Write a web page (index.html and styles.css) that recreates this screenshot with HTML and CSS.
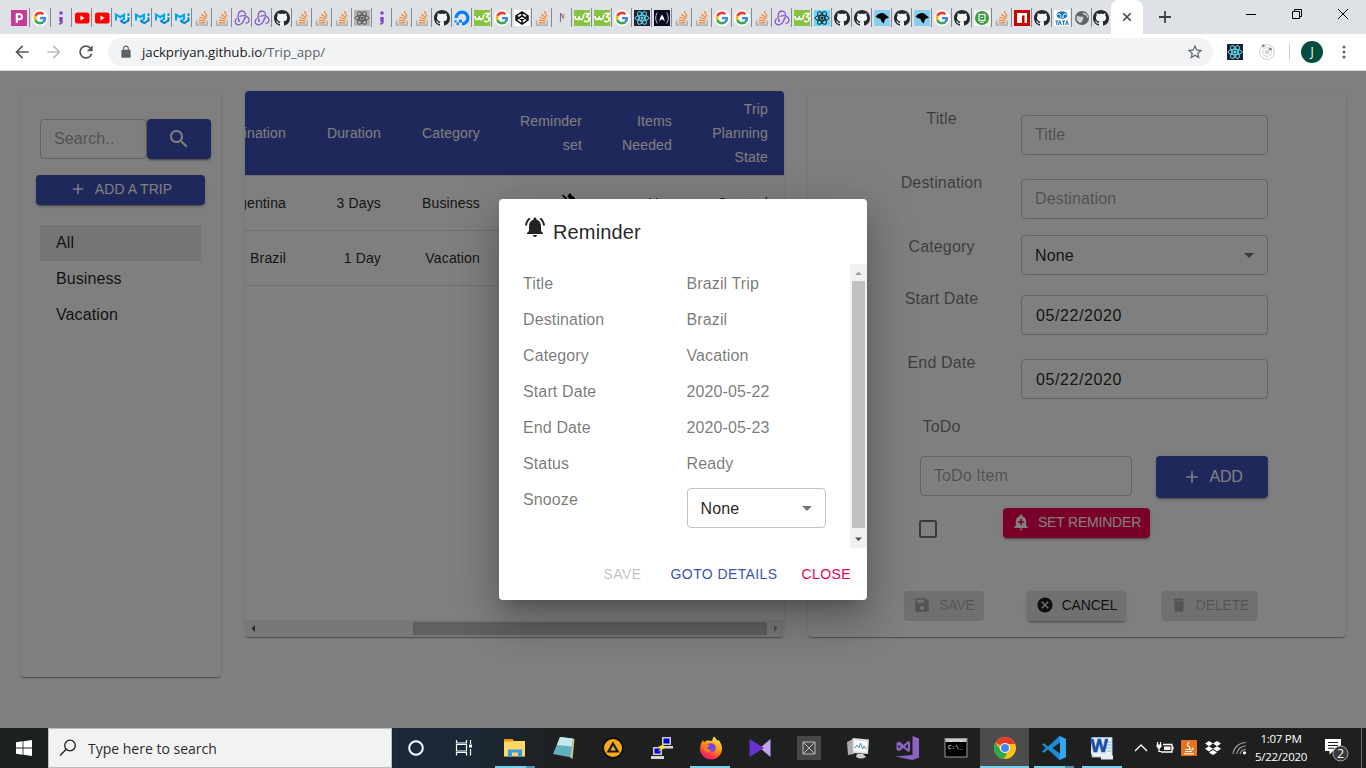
FILE: index.html
```html
<!DOCTYPE html>
<html lang="en">
<head>
<meta charset="utf-8">
<title>Trip app</title>
<link rel="stylesheet" href="styles.css">
</head>
<body>
<svg class="defs" width="0" height="0">
  <symbol id="pp" viewBox="0 0 16 16"><rect width="16" height="16" fill="#c73a94"/><path d="M5.800 13V4.200h2.700a2.400 2.400 0 010 4.900H5.800" fill="none" stroke="#fff" stroke-width="2.100"/></symbol>
  <symbol id="gg" viewBox="0 0 16 16"><circle cx="8" cy="8" r="8" fill="#fff"/><g transform="translate(1.6 1.6) scale(.267)"><path fill="#EA4335" d="M24 9.5c3.54 0 6.71 1.22 9.21 3.6l6.85-6.85C35.9 2.38 30.47 0 24 0 14.62 0 6.51 5.38 2.56 13.22l7.98 6.19C12.43 13.72 17.74 9.5 24 9.5z"/><path fill="#4285F4" d="M46.98 24.55c0-1.57-.15-3.09-.38-4.55H24v9.02h12.94c-.58 2.96-2.26 5.48-4.78 7.18l7.73 6c4.51-4.18 7.09-10.36 7.09-17.65z"/><path fill="#FBBC05" d="M10.53 28.59c-.48-1.45-.76-2.99-.76-4.59s.27-3.14.76-4.59l-7.98-6.19C.92 16.46 0 20.12 0 24c0 3.88.92 7.54 2.56 10.78l7.97-6.19z"/><path fill="#34A853" d="M24 48c6.48 0 11.93-2.13 15.89-5.81l-7.73-6c-2.15 1.45-4.92 2.3-8.16 2.3-6.26 0-11.57-4.22-13.47-9.91l-7.98 6.19C6.51 42.62 14.62 48 24 48z"/></g></symbol>
  <symbol id="semi" viewBox="0 0 16 16"><circle cx="8" cy="3" r="1.8" fill="#8b3fc4"/><path d="M6.3 7h3.4v5q0 2-3.4 3v-2q1.300-.4 1.300-1.200H6.300z" fill="#8b3fc4"/></symbol>
  <symbol id="yt" viewBox="0 0 16 16"><rect x="1" y="2.500" width="14.500" height="11" rx="2.600" fill="#f00"/><path d="M6.500 5.500v5l4-2.500z" fill="#fff"/></symbol>
  <symbol id="mui" viewBox="0 0 16 16"><path d="M2 10.500V4.500L6.200 7.200 10 4.800V9L6.500 11" fill="none" stroke="#00a6f0" stroke-width="2"/><path d="M6.500 10.800l3.800 2.200 4.200-2.500V7.200M14.500 3.500v2.300" fill="none" stroke="#0081cb" stroke-width="2"/></symbol>
  <symbol id="so" viewBox="0 0 16 16"><path d="M2.500 10.500v4.700h10.700v-4.700" fill="none" stroke="#a2a5a9" stroke-width="1.300"/><path d="M4.500 12.800h6.700M4.700 10.100l6.600.9M5.500 7.200l6.200 2.100M7.300 4.200l5.200 3.700M10.200 1.200l3.200 5.300" stroke="#f48024" stroke-width="1.200" fill="none"/></symbol>
  <symbol id="rdx" viewBox="0 0 16 16"><g fill="none" stroke="#8a5cc6" stroke-width="1.300"><path d="M5 10.500C2.500 5 5 1 8 1c2.300 0 3.700 2 3.400 4.200"/><path d="M5.500 6.500c6-2.500 10 .6 9.500 4.200-.3 2-2 2.800-3.600 2.400"/><path d="M10.500 8.500C9 14.500 4 16.200 1.800 13.500.5 11.700 1.500 9.500 3 8.500"/></g><circle cx="11" cy="8" r="1.100" fill="#8a5cc6"/><circle cx="5" cy="11" r="1.100" fill="#8a5cc6"/></symbol>
  <symbol id="gh" viewBox="0 0 16 16"><circle cx="8" cy="8" r="7.500" fill="#f4f5f6"/><path fill="#24292e" d="M8 0C3.580 0 0 3.580 0 8c0 3.540 2.290 6.530 5.470 7.590.4.070.55-.17.55-.38 0-.19-.01-.82-.01-1.490-2.010.370-2.530-.49-2.690-.94-.09-.23-.48-.94-.82-1.130-.28-.15-.68-.52-.01-.53.630-.01 1.080.580 1.230.820.720 1.210 1.870.870 2.330.660.070-.52.280-.87.510-1.070-1.780-.2-3.640-.89-3.640-3.950 0-.87.310-1.590.820-2.150-.08-.2-.36-1.020.080-2.120 0 0 .670-.21 2.200.820.640-.18 1.320-.27 2-.27.680 0 1.360.090 2 .27 1.530-1.040 2.200-.82 2.200-.82.440 1.100.160 1.920.080 2.120.510.560.820 1.270.820 2.150 0 3.070-1.870 3.750-3.650 3.950.290.250.540.730.540 1.480 0 1.070-.01 1.930-.01 2.200 0 .210.150.460.550.380A8.013 8.013 0 0016 8c0-4.420-3.580-8-8-8z"/></symbol>
  <symbol id="atom" viewBox="0 0 16 16"><g fill="none" stroke="currentColor" stroke-width="1"><ellipse cx="8" cy="8" rx="7" ry="2.700"/><ellipse cx="8" cy="8" rx="7" ry="2.700" transform="rotate(60 8 8)"/><ellipse cx="8" cy="8" rx="7" ry="2.700" transform="rotate(120 8 8)"/></g><circle cx="8" cy="8" r="1.500" fill="currentColor"/></symbol>
  <symbol id="do" viewBox="0 0 16 16"><path d="M8 15.500v-3.200A4.300 4.300 0 103.700 8H.5A7.500 7.500 0 118 15.500z" fill="#0080ff"/><path d="M5 9.800h3v2.700H5zM2.600 12.500H5V15H2.600zM.6 10.300h2v2.200h-2z" fill="#0080ff"/></symbol>
  <symbol id="w3" viewBox="0 0 16 16"><rect width="16" height="16" fill="#86c440"/><path d="M.8 6q.4 3.500 2.200 3.500T5.200 6.300q.4 3.200 2.200 3.200T9.800 4.500M10.500 3.500h4.700l-2.500 3.200q2.600.3 2.600 2.500t-2.800 2.500q-1.500 0-2.300-1.200" fill="none" stroke="#fff" stroke-width="1.600"/></symbol>
  <symbol id="cp" viewBox="0 0 16 16"><rect width="16" height="16" fill="#fff"/><path d="M8 1.800l6 4v4.400l-6 4-6-4V5.800zM8 1.800v4m0 4.400v4M2 5.800l6 4.400 6-4.400M2 10.200l6-4.400 6 4.400" fill="none" stroke="#111" stroke-width="1.500"/></symbol>
  <symbol id="nn" viewBox="0 0 16 16"><path d="M6.500 3v9" stroke="#777" stroke-width="1.200"/><path d="M7 3.500l2.300 5" stroke="#bb4a48" stroke-width="1"/><path d="M9.700 3.500v5" stroke="#8a98ad" stroke-width="1"/></symbol>
  <symbol id="fcc" viewBox="0 0 16 16"><rect width="16" height="16" fill="#0a0a23"/><path d="M3.300 2.500Q0 8 3.300 13.500M12.700 2.500Q16 8 12.700 13.500" fill="none" stroke="#bbb" stroke-width="1"/><path d="M5.500 11.500Q5.200 9 8 4.500q2.800 4.500 2.500 7l-1.500-2H7z" fill="#fff"/></symbol>
  <symbol id="bird" viewBox="0 0 16 16"><rect width="16" height="16" fill="#86cff0"/><path d="M1.500 6.500q2-3 6-3.500 3.500-.3 5 2.500l2.500 2-3.500 1.500-1 1.500-.5 3-2.500-2-1-2.500L3.500 8z" fill="#000"/></symbol>
  <symbol id="grn" viewBox="0 0 16 16"><rect width="16" height="16" fill="#f2f5f2"/><circle cx="8" cy="8" r="7" fill="#3d9a43"/><rect x="5" y="4.500" width="6" height="6" fill="none" stroke="#e9f5ea" stroke-width="1.300"/><path d="M7 7.500h2M6 12.300h4" stroke="#e9f5ea"/></symbol>
  <symbol id="npm" viewBox="0 0 16 16"><rect width="16" height="16" fill="#cb0000"/><path d="M3 3h10v10h-2.500V5.500H8V13H3z" fill="#fff"/></symbol>
  <symbol id="tata" viewBox="0 0 16 16"><rect width="16" height="16" fill="#fff"/><ellipse cx="8" cy="5" rx="5.500" ry="3.800" fill="#1b75bb"/><path d="M3 5q4-3.500 4 3M13 5Q9 1.500 9 8" stroke="#fff" fill="none"/><path d="M1.200 11h3.200M2.800 11v4M4.300 15l1.500-4 1.500 4M8 11h3.200M9.600 11v4M11.500 15l1.500-4 1.500 4" fill="none" stroke="#1b75bb" stroke-width="1.100"/></symbol>
  <symbol id="globe" viewBox="0 0 16 16"><circle cx="8" cy="8" r="7" fill="#5f6368"/><path d="M3 5.500Q5 7 7.500 6.500T9 9.500q-1 3-3 3.500Q2.500 11 2.500 8zM8.500 2.500q0 2 2.500 2.500t2 3l1.500-.5Q13.500 3 8.500 2.500z" fill="#d0d2d5"/></symbol>
  <symbol id="i-add" viewBox="0 0 24 24"><path d="M19 13h-6v6h-2v-6H5v-2h6V5h2v6h6v2z"/></symbol>
  <symbol id="i-drop" viewBox="0 0 24 24"><path d="M7 10l5 5 5-5z"/></symbol>
  <symbol id="i-back" viewBox="0 0 24 24"><path d="M20 11H7.830l5.590-5.590L12 4l-8 8 8 8 1.410-1.410L7.830 13H20v-2z"/></symbol>
</svg>

<header class="tabs">
  <i class="tab wide"><svg><use href="#pp"/></svg></i><i class="tab wide"><svg><use href="#gg"/></svg></i><i class="tab wide"><svg><use href="#semi"/></svg></i>
  <i class="tab"><svg><use href="#yt"/></svg></i><i class="tab"><svg><use href="#yt"/></svg></i><i class="tab"><svg><use href="#mui"/></svg></i><i class="tab"><svg><use href="#mui"/></svg></i><i class="tab"><svg><use href="#mui"/></svg></i><i class="tab"><svg><use href="#mui"/></svg></i>
  <i class="tab"><svg><use href="#so"/></svg></i><i class="tab"><svg><use href="#so"/></svg></i><i class="tab"><svg><use href="#rdx"/></svg></i><i class="tab"><svg><use href="#rdx"/></svg></i><i class="tab"><svg><use href="#gh"/></svg></i>
  <i class="tab"><svg><use href="#so"/></svg></i><i class="tab"><svg><use href="#so"/></svg></i><i class="tab"><svg><use href="#so"/></svg></i><i class="tab"><svg class="atom-gray"><use href="#atom"/></svg></i><i class="tab"><svg><use href="#semi"/></svg></i>
  <i class="tab"><svg><use href="#so"/></svg></i><i class="tab"><svg><use href="#so"/></svg></i><i class="tab"><svg><use href="#gh"/></svg></i><i class="tab"><svg><use href="#do"/></svg></i><i class="tab"><svg><use href="#w3"/></svg></i><i class="tab"><svg><use href="#gg"/></svg></i>
  <i class="tab"><svg><use href="#cp"/></svg></i><i class="tab"><svg><use href="#so"/></svg></i><i class="tab"><svg><use href="#nn"/></svg></i><i class="tab"><svg><use href="#w3"/></svg></i><i class="tab"><svg><use href="#w3"/></svg></i><i class="tab"><svg><use href="#gg"/></svg></i>
  <i class="tab"><svg class="atom-dark"><use href="#atom"/></svg></i><i class="tab"><svg><use href="#fcc"/></svg></i><i class="tab"><svg><use href="#so"/></svg></i><i class="tab"><svg><use href="#so"/></svg></i><i class="tab"><svg><use href="#gg"/></svg></i><i class="tab"><svg><use href="#gg"/></svg></i>
  <i class="tab"><svg><use href="#so"/></svg></i><i class="tab"><svg><use href="#rdx"/></svg></i><i class="tab"><svg><use href="#w3"/></svg></i><i class="tab"><svg class="atom-blue"><use href="#atom"/></svg></i><i class="tab"><svg><use href="#gh"/></svg></i><i class="tab"><svg><use href="#gh"/></svg></i>
  <i class="tab"><svg><use href="#bird"/></svg></i><i class="tab"><svg><use href="#gh"/></svg></i><i class="tab"><svg><use href="#bird"/></svg></i><i class="tab"><svg><use href="#gg"/></svg></i><i class="tab"><svg><use href="#gh"/></svg></i><i class="tab"><svg><use href="#grn"/></svg></i>
  <i class="tab"><svg><use href="#so"/></svg></i><i class="tab"><svg><use href="#npm"/></svg></i><i class="tab"><svg><use href="#gh"/></svg></i><i class="tab"><svg><use href="#tata"/></svg></i><i class="tab"><svg><use href="#globe"/></svg></i><i class="tab last"><svg><use href="#gh"/></svg></i>
  <div class="tab-active"><svg viewBox="0 0 16 16"><path d="M3.700 3.700l8.600 8.600M12.300 3.700l-8.600 8.600" stroke="#45494d" stroke-width="1.900"/></svg></div>
  <svg class="new-tab" viewBox="0 0 16 16"><path d="M8 2v12M2 8h12" stroke="#3c4043" stroke-width="1.800"/></svg>
  <div class="win">
    <svg viewBox="0 0 12 12"><path d="M1 6.500h10" stroke="#000"/></svg>
    <svg viewBox="0 0 12 12"><path d="M1.500 3.500h7v7h-7zM3.500 3V1.500h7v7H9" stroke="#000" fill="none"/></svg>
    <svg viewBox="0 0 12 12"><path d="M1 1l10 10M11 1L1 11" stroke="#000"/></svg>
  </div>
</header>

<nav class="toolbar">
  <svg class="nav-ico"><use href="#i-back"/></svg>
  <svg class="nav-ico fwd"><use href="#i-back"/></svg>
  <svg class="nav-ico reload" viewBox="0 0 24 24"><path d="M17.650 6.350C16.200 4.900 14.210 4 12 4c-4.420 0-7.990 3.580-7.990 8s3.570 8 7.990 8c3.730 0 6.840-2.550 7.730-6h-2.080c-.82 2.330-3.040 4-5.650 4-3.310 0-6-2.690-6-6s2.690-6 6-6c1.660 0 3.140.69 4.220 1.780L13 11h7V4l-2.350 2.350z"/></svg>
  <div class="omnibox">
    <svg class="lock" viewBox="0 0 24 24"><path d="M18 8h-1V6c0-2.760-2.240-5-5-5S7 3.240 7 6v2H6c-1.100 0-2 .9-2 2v10c0 1.100.9 2 2 2h12c1.100 0 2-.9 2-2V10c0-1.100-.9-2-2-2zM9 6c0-1.660 1.340-3 3-3s3 1.340 3 3v2H9V6z"/></svg>
    <span class="url">jackpriyan.github.io<span>/Trip_app/</span></span>
    <svg class="star" viewBox="0 0 24 24"><path d="M22 9.240l-7.190-.62L12 2 9.190 8.630 2 9.240l5.460 4.730L5.820 21 12 17.270 18.180 21l-1.630-7.030L22 9.240zM12 15.400l-3.760 2.270 1-4.280-3.320-2.880 4.380-.38L12 6.100l1.710 4.040 4.380.38-3.320 2.880 1 4.280L12 15.400z"/></svg>
  </div>
  <svg class="ext atom-dark"><use href="#atom"/></svg>
  <svg class="ext" viewBox="0 0 16 16"><g fill="none" stroke="#d0d0d0"><circle cx="8" cy="8" r="7.400"/><circle cx="8" cy="8" r="4.400"/></g><circle cx="8" cy="8" r="2.300" fill="#d5d5d5"/><circle cx="4.300" cy="1.700" r="1.500" fill="#888"/><circle cx="11.300" cy="5" r="1.600" fill="#888"/></svg>
  <i class="tool-sep"></i>
  <span class="avatar">J</span>
  <svg class="menu" viewBox="0 0 4 16"><circle cx="2" cy="3" r="1.500"/><circle cx="2" cy="8" r="1.500"/><circle cx="2" cy="13" r="1.500"/></svg>
</nav>

<main class="page">
  <section class="card side">
    <div class="search-row">
      <div class="field search-field placeholder">Search..</div>
      <button class="btn primary search-btn"><svg viewBox="0 0 24 24"><path d="M15.500 14h-.79l-.28-.27C15.410 12.590 16 11.110 16 9.500 16 5.910 13.090 3 9.500 3S3 5.910 3 9.500 5.910 16 9.500 16c1.610 0 3.090-.59 4.230-1.570l.27.28v.79l5 4.990L20.490 19l-4.990-5zm-6 0C7.010 14 5 11.990 5 9.500S7.010 5 9.500 5 14 7.010 14 9.500 11.990 14 9.500 14z"/></svg></button>
    </div>
    <button class="btn primary add-trip"><svg><use href="#i-add"/></svg>ADD A TRIP</button>
    <ul class="cats"><li class="on">All</li><li>Business</li><li>Vacation</li></ul>
  </section>

  <section class="card trips">
    <div class="tr head"><span>Destination</span><span>Duration</span><span>Category</span><span>Reminder<br>set</span><span>Items<br>Needed</span><span>Trip<br>Planning<br>State</span></div>
    <div class="tr"><span>Argentina</span><span>3 Days</span><span>Business</span><span><svg class="bell-off" viewBox="0 0 24 24"><path d="M20 18.690L7.840 6.140 5.270 3.490 4 4.760l2.800 2.800v.01c-.52.99-.8 2.160-.8 3.420v5l-2 2v1h13.730l2 2L21 19.720l-1-1.030zM12 22c1.110 0 2-.89 2-2h-4c0 1.110.89 2 2 2zm6-7.320V11c0-3.080-1.640-5.640-4.500-6.320V4c0-.83-.67-1.500-1.500-1.500s-1.500.67-1.500 1.500v.68c-.15.030-.29.080-.42.120-.1.030-.2.070-.3.110h-.01c-.01 0-.01 0-.02.010-.23.090-.46.200-.68.310 0 0-.01 0-.01.010L18 14.680z"/></svg></span><span>Yes</span><span>Created</span></div>
    <div class="tr"><span>Brazil</span><span>1 Day</span><span>Vacation</span><span></span><span></span><span></span></div>
    <div class="hbar"><svg viewBox="0 0 17 17"><path d="M10 5v7L6.500 8.500z" fill="#505050"/></svg><i></i><svg viewBox="0 0 17 17"><path d="M7 5v7l3.500-3.500z" fill="#a3a3a3"/></svg></div>
  </section>

  <section class="card details">
    <div class="row"><label>Title</label><div class="field placeholder">Title</div></div>
    <div class="row"><label>Destination</label><div class="field placeholder">Destination</div></div>
    <div class="row short"><label>Category</label><div class="field select"><span>None</span><svg><use href="#i-drop"/></svg></div></div>
    <div class="row"><label>Start Date</label><div class="field date">05/22/2020</div></div>
    <div class="row"><label>End Date</label><div class="field date">05/22/2020</div></div>
    <div class="row todo-label"><label>ToDo</label></div>
    <div class="todo"><div class="field placeholder">ToDo Item</div><button class="btn primary add"><svg><use href="#i-add"/></svg>ADD</button></div>
    <div class="remind">
      <svg class="check" viewBox="0 0 24 24"><path d="M19 5v14H5V5h14m0-2H5c-1.100 0-2 .9-2 2v14c0 1.100.9 2 2 2h14c1.100 0 2-.9 2-2V5c0-1.100-.9-2-2-2z"/></svg>
      <button class="btn secondary tight"><svg viewBox="0 0 24 24"><path d="M10.010 21.010c0 1.100.89 1.990 1.990 1.990s1.990-.89 1.990-1.990h-3.980zm8.870-4.190V11c0-3.250-2.250-5.970-5.290-6.690v-.72C13.590 2.710 12.880 2 12 2s-1.590.71-1.590 1.590v.72C7.370 5.030 5.120 7.750 5.120 11v5.820L3 18.940V20h18v-1.060l-2.120-2.120zM16 13.010h-3v3h-2v-3H8V11h3V8h2v3h3v2.010z"/></svg>SET REMINDER</button>
    </div>
    <div class="form-actions">
      <button class="btn disabled tight b-save"><svg viewBox="0 0 24 24"><path d="M17 3H5c-1.110 0-2 .9-2 2v14c0 1.100.89 2 2 2h14c1.100 0 2-.9 2-2V7l-4-4zm-5 16c-1.660 0-3-1.340-3-3s1.340-3 3-3 3 1.340 3 3-1.340 3-3 3zm3-10H5V5h10v4z"/></svg>SAVE</button>
      <button class="btn plain tight b-cancel"><svg viewBox="0 0 24 24"><path d="M12 2C6.470 2 2 6.470 2 12s4.470 10 10 10 10-4.470 10-10S17.530 2 12 2zm5 13.590L15.590 17 12 13.410 8.410 17 7 15.590 10.590 12 7 8.410 8.410 7 12 10.590 15.590 7 17 8.410 13.410 12 17 15.590z"/></svg>CANCEL</button>
      <button class="btn disabled tight b-delete"><svg viewBox="0 0 24 24"><path d="M6 19c0 1.100.9 2 2 2h8c1.100 0 2-.9 2-2V7H6v12zM19 4h-3.500l-1-1h-5l-1 1H5v2h14V4z"/></svg>DELETE</button>
    </div>
  </section>

  <div class="backdrop">
    <div class="dialog">
      <h2><svg viewBox="0 0 24 24"><path d="M7.580 4.080L6.150 2.650C3.750 4.480 2.170 7.300 2.030 10.500h2c.15-2.650 1.510-4.970 3.550-6.420zm12.390 6.420h2c-.15-3.200-1.730-6.020-4.120-7.850l-1.420 1.430c2.020 1.450 3.390 3.770 3.540 6.420zM18 11c0-3.070-1.640-5.640-4.500-6.320V4c0-.83-.67-1.500-1.500-1.500s-1.500.67-1.500 1.500v.68C7.630 5.360 6 7.920 6 11v5l-2 2v1h16v-1l-2-2v-5zm-6 11c.14 0 .27-.01.4-.04.65-.14 1.180-.58 1.440-1.180.1-.24.15-.5.15-.78h-4c.01 1.100.9 2 2.010 2z"/></svg><span>Reminder</span></h2>
      <div class="dialog-body">
        <dl>
          <dt>Title</dt><dd>Brazil Trip</dd>
          <dt>Destination</dt><dd>Brazil</dd>
          <dt>Category</dt><dd>Vacation</dd>
          <dt>Start Date</dt><dd>2020-05-22</dd>
          <dt>End Date</dt><dd>2020-05-23</dd>
          <dt>Status</dt><dd>Ready</dd>
          <dt>Snooze</dt><dd><div class="field select"><span>None</span><svg><use href="#i-drop"/></svg></div></dd>
        </dl>
        <div class="vbar"><svg viewBox="0 0 17 17"><path d="M5 11h7L8.500 7.500z" fill="#a3a3a3"/></svg><i></i><svg viewBox="0 0 17 17"><path d="M5 6.500h7L8.500 10z" fill="#505050"/></svg></div>
      </div>
      <div class="dialog-actions"><button class="link off">SAVE</button><button class="link blue">GOTO DETAILS</button><button class="link pink">CLOSE</button></div>
    </div>
  </div>
</main>

<footer class="taskbar">
  <div class="start"><svg viewBox="0 0 16 16"><path d="M0 2.200L6.600 1.300v6.300H0zM7.400 1.200L16 0v7.600H7.400zM0 8.400h6.600v6.300L0 13.800zM7.400 8.400H16V16l-8.600-1.200z" fill="#fff"/></svg></div>
  <div class="tsearch"><svg viewBox="0 0 18 18"><circle cx="11" cy="6.500" r="5.300" fill="none" stroke="#222" stroke-width="1.300"/><path d="M7.200 10.300L1 16.500" stroke="#222" stroke-width="1.400"/></svg><span>Type here to search</span></div>
  <div class="cell sys"><svg viewBox="0 0 24 24"><circle cx="12" cy="12" r="6.800" fill="none" stroke="#fff" stroke-width="2"/></svg></div>
  <div class="cell sys"><svg viewBox="0 0 24 24"><path d="M4.500 4v3h10V4M4.500 19.500v-3h10v3M4.500 8.500h10v6.500h-10zM18.500 4v4M18.500 13v6.500" fill="none" stroke="#fff" stroke-width="1.200"/><path d="M17 8.500h3v3h-3z" fill="#fff"/></svg></div>
  <div class="cell run multi first"><svg viewBox="0 0 24 24"><path d="M1 3h8l2 2h11v15.500H1z" fill="#ffd767"/><path d="M1 3h8l1.500 2.500H1z" fill="#e5a000"/><path d="M5 21v-7.500h14V21h-4v-4.500H9V21z" fill="#3a9be0"/></svg></div>
  <div class="cell"><svg viewBox="0 0 24 24"><path d="M8 1l13 1.500-1.500 19L1 18z" fill="#5fb1c0"/><path d="M8 1l13 1.500-1 8L5 9z" fill="#c6e8ed"/><path d="M21 2.500l1.500 1L20.500 23l-2-1z" fill="#d8c48a"/></svg></div>
  <div class="cell"><svg viewBox="0 0 24 24"><circle cx="12" cy="12" r="11" fill="#111"/><circle cx="12" cy="12" r="9" fill="#fbab18"/><path d="M12 7.500l4.700 8H7.500z" fill="none" stroke="#1a1a1a" stroke-width="2.200"/></svg></div>
  <div class="cell"><svg viewBox="0 0 24 24"><path d="M12 1h9v8h-9zM3 11h9v8H3z" fill="#ccc"/><path d="M13.500 2.500h6v5h-6zM4.500 12.500h6v5h-6z" fill="#0000d8"/><path d="M12 10h11v2.500H12zM1 20h13v3H1z" fill="#d8d8d8"/><path d="M16 7l-8 4 3.500 1L7 16l8-4-3-1z" fill="#ffe800"/></svg></div>
  <div class="cell run"><svg viewBox="0 0 24 24"><defs><linearGradient id="ff" x1=".8" y1="0" x2=".3" y2="1"><stop offset="0" stop-color="#fff44f"/><stop offset=".45" stop-color="#ff980e"/><stop offset=".8" stop-color="#ff3647"/><stop offset="1" stop-color="#e31587"/></linearGradient></defs><path d="M15 .5q2 2 3 4l1.500-.5q3.500 4 3.500 8.500a11 11 0 01-22 0Q1 8 4 4l1 2.500Q7 4 9 4.500L13 5q.5-3 2-4.500z" fill="url(#ff)"/><path d="M8 8.500q5-2.500 8 .5 2 4-1.500 6.500-4 2-7-1.500Q6.500 11 8 8.500z" fill="#7542e5"/><path d="M3 9q4-1.500 8 .5l-3 2q1 3 5 3-4 3.500-8 0z" fill="#ff7a1c"/></svg></div>
  <div class="cell"><svg viewBox="0 0 24 24"><path d="M22.500 3L12 12l10.500 9z" fill="#c3a5ed"/><path d="M1.500 3L16 12 1.500 21z" fill="#6a2fd0"/></svg></div>
  <div class="cell"><svg viewBox="0 0 24 24"><path d="M0 0h24v24H0z" fill="#484848"/><path d="M6 6h12v12H6zM6 6l12 12M18 6L6 18" fill="none" stroke="#bbb"/></svg></div>
  <div class="cell"><svg viewBox="0 0 24 24"><path d="M1 6l6-3 1 15-6 1z" fill="#ababab"/><path d="M6.500 2l16.500 1.500-1 14.500-15-1z" fill="#dfe1e1"/><path d="M8.500 4.300L21 5.500l-.7 10.500-11.500-1z" fill="#fff"/><path d="M9 12l2-3 2 3 1.500-5 2 6 1.500-3 2 3" fill="none" stroke="#4b91bd"/><path d="M11 18h6l3 3q-5 3-10 0z" fill="#cbcbcb"/></svg></div>
  <div class="cell"><svg viewBox="0 0 24 24"><path d="M17.500 0L24 2.500v19L17.500 24 0 20.500 17.500 19z" fill="#8b63c6"/><path d="M1.500 7l3-1.500 4 3.500 4.500-4 2 1v9l-2 1-4.500-4L4.500 15l-3-1zM3.500 8.800v3.700l2-1.800zM13 8v5L10 10.500z" fill="#8b63c6" fill-rule="evenodd"/></svg></div>
  <div class="cell"><svg viewBox="0 0 24 24"><rect x="1" y="2.500" width="22" height="18.500" fill="#000" stroke="#999"/><path d="M1.500 3h21v3h-21z" fill="#ccc"/><text x="4" y="13" font-size="6" fill="#fff" class="ico-mono">C:\_</text></svg></div>
  <div class="cell run current"><svg viewBox="0 0 24 24"><circle cx="12" cy="12" r="11" fill="#fbc116"/><path d="M12 12L2.500 6.500A11 11 0 0121.500 6.500L22 8H12z" fill="#e33b2e"/><path d="M2.500 6.500L8 15l6 2-3 6A11 11 0 012.500 6.500z" fill="#2da94f"/><circle cx="12" cy="12" r="5" fill="#fff"/><circle cx="12" cy="12" r="4" fill="#4285f4"/></svg></div>
  <div class="cell run multi"><svg viewBox="0 0 24 24"><path d="M17.500 0L24 3v18l-6.500 3L6 13.500l-4 3.300L0 15.500l3.800-3.600L0 8.500l2-1.300 4 3.200zM18 6.500L10.500 12l7.500 5.500z" fill="#1f8ad2" fill-rule="evenodd"/><path d="M17.500 0L24 3v18l-6.500 3 .5-6.500v-11z" fill="#35a7f0"/></svg></div>
  <div class="cell run word"><svg viewBox="0 0 24 24"><path d="M2 1.500h20V21H2z" fill="#f4f7fb" stroke="#9db8de"/><path d="M17 6h4M17 9h4M17 12h4M17 15h4" stroke="#7fa5da"/><path d="M1 2h16v16H1z" fill="#dce8f8"/><text x="9.300" y="16.300" text-anchor="middle" font-size="18" fill="#174fa3" stroke="#174fa3" stroke-width=".5" class="ico-text word-w">W</text><path d="M11 18h10l2 2v3.500H11z" fill="#e8eef6"/></svg></div>
  <div class="tray">
    <svg viewBox="0 0 24 24"><path d="M6 15l6-6 6 6" fill="none" stroke="#fff" stroke-width="1.400"/></svg>
    <svg viewBox="0 0 24 24"><path d="M10 8.500h9v7.500H8M20 10.500v3" fill="none" stroke="#fff" stroke-width="1.300"/><path d="M11 10.500h6.500v3.500H11z" fill="#fff"/><path d="M4.500 6v3m3-3v3M6 12v3.500h2" fill="none" stroke="#fff" stroke-width="1.200"/><path d="M3.500 8.500h5v2L7 12.500H5L3.500 10.500z" fill="#fff"/></svg>
    <svg viewBox="0 0 24 24"><rect x="4" y="4" width="16" height="16" rx="1" fill="#e8731f"/><path d="M12.500 6q-4 3 0 5 1 1-.5 2M8.500 13.500h6m-6.500 2h7m-8 2.200h10M15 12q2.500 0 0 2" fill="none" stroke="#fff" stroke-width="1.100"/></svg>
    <svg viewBox="0 0 24 24"><path d="M8 5l4 2.600-4 2.600-4-2.600zM16 5l4 2.600-4 2.600-4-2.600zM8 10.200l4 2.600-4 2.600-4-2.600zM16 10.200l4 2.600-4 2.600-4-2.600zM12 14l4 2.500-4 2.500-4-2.500z" fill="#fff"/></svg>
    <svg class="wifi" viewBox="0 0 24 24"><path d="M5 18A13 13 0 0118 6.500M8.500 18A9.500 9.500 0 0118 10M12 18a6 6 0 016-4.500" fill="none" stroke="#999" stroke-width="1.200"/><circle cx="16.500" cy="16.800" r="1.600" fill="#fff"/></svg>
    <div class="clock"><span>1:07 PM</span><span>5/22/2020</span></div>
    <svg class="note" viewBox="0 0 28 28"><path d="M2 5h16v12h-8l-3.500 3.500V17H2z" fill="#fff"/><path d="M5 8.500h10M5 11.500h10M5 14.300h6" stroke="#222"/><circle cx="17.500" cy="19.500" r="7.500" fill="#3a3a3a" stroke="#aaa"/><text x="17.500" y="24" text-anchor="middle" font-size="12.500" fill="#fff" class="ico-text">2</text></svg>
    <i class="peek"></i>
  </div>
</footer>
</body>
</html>
```
FILE: styles.css
```css
* { box-sizing: border-box; }
body { margin: 0; width: 1366px; height: 768px; overflow: hidden; display: flex; flex-direction: column; font-family: "Liberation Sans", Arial, sans-serif; color: rgba(0,0,0,.87); }
.defs { position: absolute; }
.ico-text { font-family: "Open Sans", sans-serif; }
.word-w { font-weight: 700; }
.ico-mono { font-family: "Liberation Mono", monospace; }
svg { display: block; flex: none; }

/* browser tabs */
.tabs { height: 34px; flex: none; background: #dee1e6; display: flex; align-items: flex-start; padding-left: 9px; }
.tab { width: 20px; height: 19px; margin-top: 8px; flex: none; border-right: 1px solid #858a8f; display: flex; align-items: center; justify-content: center; }
.tab.wide { width: 21px; }
.tab.last { border-color: transparent; width: 19px; }
.tab svg { width: 16px; height: 16px; }
.atom-gray { background: #b4b4b4; color: #555; }
.atom-dark { background: #20232a; color: #61dafb; }
.atom-blue { background: #61dafb; color: #20232a; }
.tab-active { width: 32px; height: 34px; background: #fff; border-radius: 8px 8px 0 0; display: flex; align-items: center; justify-content: center; }
.tab-active svg { width: 14px; height: 14px; }
.new-tab { width: 16px; height: 16px; margin: 9px 0 0 14px; }
.win { display: flex; gap: 34px; margin: 8px 0 0 72px; }
.win svg { width: 12px; height: 12px; }

/* address bar */
.toolbar { height: 37px; flex: none; background: #fff; border-bottom: 1px solid #d5d7da; display: flex; align-items: center; padding-left: 12px; }
.nav-ico { width: 20px; height: 20px; fill: #55595e; margin-right: 12px; }
.fwd { transform: scaleX(-1); fill: #bdbfc2; }
.omnibox { width: 1105px; height: 28px; border-radius: 14px; background: #f1f3f4; display: flex; align-items: center; padding: 0 9px 0 11px; }
.lock { width: 14px; height: 14px; fill: #5f6368; }
.url { font: 13.300px "Open Sans", sans-serif; color: #202124; margin-left: 9px; letter-spacing: -.06px; }
.url span { color: #5f6368; }
.star { width: 18px; height: 18px; fill: #5f6368; margin-left: auto; }
.ext { width: 16px; height: 16px; margin-left: 14px; }
.ext + .ext { margin-left: 16px; }
.tool-sep { width: 1px; height: 16px; background: #cdcfd2; margin: 0 11px 0 14px; }
.avatar { width: 22px; height: 22px; border-radius: 50%; background: #004d40; color: #fff; font: 12px/22px "Open Sans", sans-serif; text-align: center; }
.menu { width: 4px; height: 16px; margin-left: 19px; fill: #5f6368; }

/* page */
.page { position: relative; height: 657px; flex: none; overflow: hidden; background: #fff; display: flex; align-items: flex-start; gap: 24px; padding: 20px; letter-spacing: .15px; }
.card { border-radius: 4px; background: #fff; box-shadow: 0 2px 1px -1px rgba(0,0,0,.2), 0 1px 1px rgba(0,0,0,.14), 0 1px 3px rgba(0,0,0,.12); flex: none; }
.field { height: 40px; border: 1px solid rgba(0,0,0,.23); border-radius: 4px; padding: 0 13px; display: flex; align-items: center; font-size: 16px; color: rgba(0,0,0,.87); letter-spacing: .1px; }
.placeholder { color: rgba(0,0,0,.38); letter-spacing: .1px; }
.select { padding-right: 6px; }
.select span { padding-top: 2px; }
.select svg { width: 24px; height: 24px; margin-left: auto; fill: rgba(0,0,0,.54); }
.date { padding-left: 14px; padding-top: 2px; letter-spacing: .6px; }
.btn { border: 0; border-radius: 4px; height: 30px; padding: 0; font: 14px/24px "Liberation Sans", Arial, sans-serif; letter-spacing: .05px; display: flex; align-items: center; justify-content: center; color: #fff; white-space: nowrap; box-shadow: 0 3px 1px -2px rgba(0,0,0,.2), 0 2px 2px rgba(0,0,0,.14), 0 1px 5px rgba(0,0,0,.12); }
.btn svg { width: 18px; height: 18px; margin-right: 8px; fill: currentColor; }
.tight { letter-spacing: -.2px; }
.primary { background: #3f51b5; }
.secondary { background: #f50057; }
.plain { background: #e0e0e0; color: rgba(0,0,0,.87); }
.disabled { background: rgba(0,0,0,.12); color: rgba(0,0,0,.26); box-shadow: none; }

.side { width: 201px; height: 586px; padding: 28px 10px 0 20px; }
.search-row { display: flex; }
.search-field { width: 107px; }
.search-btn { width: 64px; height: 40px; }
.search-btn svg { width: 24px; height: 24px; margin: 0; }
.add-trip { width: 169px; margin: 16px 0 0 -4px; padding-bottom: 2px; }
.cats { list-style: none; width: 161px; margin: 20px 0 0; padding: 0; }
.cats li { height: 36px; line-height: 35px; padding-left: 16px; font-size: 16px; letter-spacing: .1px; }
.cats .on { background: rgba(0,0,0,.08); }

.trips { width: 539px; height: 546px; overflow: hidden; display: flex; flex-direction: column; }
.tr { display: grid; grid-template-columns: 57px 95px 99px 102px 90px 96px; height: 55px; border-bottom: 1px solid #e0e0e0; font-size: 14px; line-height: 24px; text-align: right; }
.tr > span { display: flex; align-items: center; justify-content: flex-end; padding-right: 16px; overflow: hidden; }
.tr.head { height: 85px; background: #3f51b5 content-box; color: #fff; letter-spacing: .15px; }
.bell-off { width: 24px; height: 24px; }
.hbar { height: 17px; margin-top: auto; background: #f1f1f1; display: flex; align-items: center; }
.hbar svg, .vbar svg { width: 17px; height: 17px; }
.hbar i { width: 354px; height: 13px; background: #c1c1c1; margin-left: auto; }

.details { width: 538px; height: 546px; padding: 15px 78px 0 54px; }
.row { height: 64px; display: flex; }
.row label { width: 159px; text-align: center; font-size: 16px; line-height: 26px; color: rgba(0,0,0,.54); }
.row .field { width: 247px; margin-top: 9px; }
.row.short { height: 52px; }
.row.short .field { margin-top: 1px; }
.row.todo-label { height: 42px; }
.todo { display: flex; gap: 24px; padding-left: 58px; }
.todo .field { width: 212px; }
.add { width: 112px; height: 42px; font-size: 16px; letter-spacing: -.3px; }
.add svg { width: 20px; height: 20px; }
.remind { display: flex; margin-top: 10px; padding-left: 54px; }
.check { width: 24px; height: 24px; margin-top: 9px; fill: rgba(0,0,0,.54); }
.remind .btn { width: 147px; margin-left: 63px; padding-bottom: 2px; }
.form-actions { display: flex; margin-top: 50px; padding-left: 42px; }
.form-actions .btn { padding-bottom: 2px; }
.b-save { width: 80px; }
.b-cancel { width: 99px; margin-left: 43px; }
.b-delete { width: 97px; margin-left: 35px; }

/* reminder dialog */
.backdrop { position: absolute; inset: 0; background: rgba(0,0,0,.5); display: flex; align-items: center; justify-content: center; }
.dialog { width: 368px; height: 401px; background: #fff; border-radius: 4px; display: flex; flex-direction: column; box-shadow: 0 11px 15px -7px rgba(0,0,0,.2), 0 24px 38px 3px rgba(0,0,0,.14), 0 9px 46px 8px rgba(0,0,0,.12); }
.dialog h2 { height: 65px; margin: 0; padding: 16px 24px; display: flex; gap: 6px; font-size: 20px; font-weight: 400; line-height: 34px; letter-spacing: .15px; }
.dialog h2 svg { width: 24px; height: 24px; fill: #222; }
.dialog-body { height: 284px; display: flex; }
dl { width: 351px; margin: 0; padding: 7px 24px; display: grid; grid-template-columns: 163.500px 139px; grid-auto-rows: 36px; font-size: 16px; line-height: 26px; color: rgba(0,0,0,.54); letter-spacing: .12px; }
dt, dd { margin: 0; }
dl .field { margin-top: 1px; }
.vbar { width: 17px; background: #f1f1f1; display: flex; flex-direction: column; align-items: center; justify-content: space-between; }
.vbar i { width: 13px; height: 247px; background: #c1c1c1; margin-bottom: auto; }
.dialog-actions { height: 52px; padding: 8px; display: flex; gap: 8px; justify-content: flex-end; }
.link { border: 0; background: none; height: 36px; min-width: 64px; padding: 0 8px; font: 14px "Liberation Sans", Arial, sans-serif; letter-spacing: .4px; white-space: nowrap; }
.off { color: rgba(0,0,0,.26); }
.blue { color: #3f51b5; }
.pink { color: #f50057; }

/* taskbar */
.taskbar { height: 40px; flex: none; background: linear-gradient(90deg, #1c2020 0, #1c2020 392px, #1b2938 393px, #1b2836 470px, #1f2020 560px, #1f1f1f); display: flex; }
.start { width: 48px; display: flex; align-items: center; justify-content: center; }
.start svg { width: 16px; height: 16px; }
.tsearch { width: 344px; background: #f2f2f2; border: 1px solid #bdbdbd; display: flex; align-items: center; padding-left: 10px; font: 14px "Open Sans", sans-serif; color: #2b2b2b; }
.tsearch svg { width: 18px; height: 18px; margin-right: 11px; }
.cell { width: 49px; display: flex; align-items: center; justify-content: center; border-bottom: 2px solid transparent; padding-top: 2px; }
.cell svg { width: 24px; height: 24px; }
.cell.sys { width: 48px; }
.cell.first { margin-left: 2px; }
.cell.run { background: linear-gradient(#76d0f0, #76d0f0) 4px 38px / 40px 2px no-repeat border-box; }
.cell.multi { background: linear-gradient(90deg, #76d0f0 31px, #5192a8 31px) 5px 38px / 40px 2px no-repeat border-box; }
.cell.current { background: linear-gradient(#4c4c4c 38px, #76d0f0 38px) border-box; }
.word svg { transform: translateX(-1px); }
.tray { display: flex; flex: 1; align-items: center; margin-left: 2px; color: #fff; }
.tray > svg { width: 24px; height: 24px; }
.tray .wifi { margin-left: 3px; }
.clock { width: 54px; margin-left: 2px; display: flex; flex-direction: column; align-items: center; font: 11.500px/18px "Open Sans", sans-serif; letter-spacing: -.25px; white-space: nowrap; }
.tray .note { width: 28px; height: 28px; margin-left: 15px; }
.peek { width: 1px; height: 40px; background: #6a6a6a; margin: 0 4px 0 auto; }
```
